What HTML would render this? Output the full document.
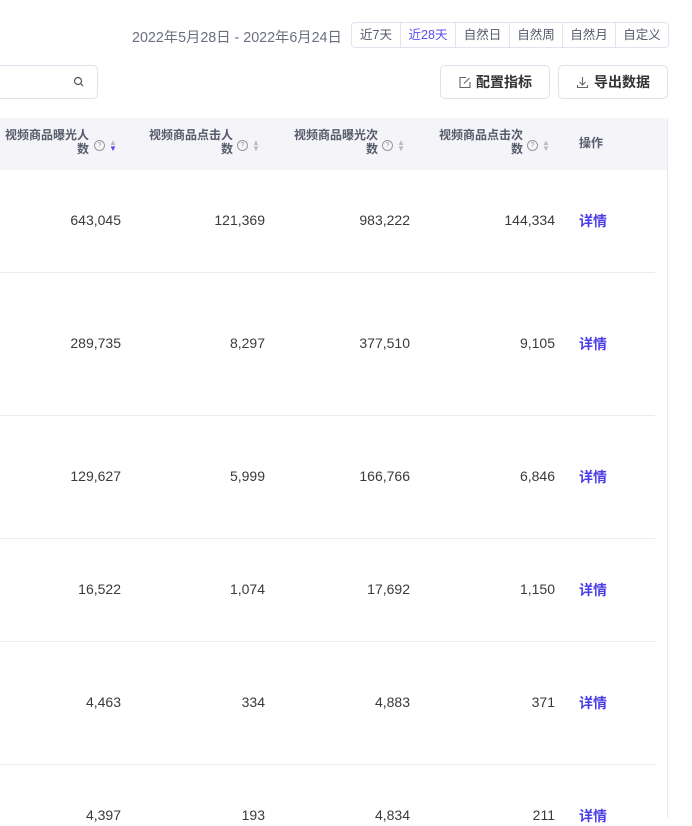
<!DOCTYPE html><html><head><meta charset="utf-8"><style>
body{margin:0;width:692px;height:818px;overflow:hidden;background:#fff;font-family:"Liberation Sans","Noto Sans CJK SC",sans-serif;position:relative}
.a{position:absolute}
.date{top:26px;left:132px;font-size:14.3px;color:#6b6f80}
.seg{top:22px;left:351px;height:24px;display:flex;border:1px solid #e1e3ee;border-radius:4px}
.seg div{font-size:12.5px;color:#555a6b;line-height:24px;border-left:1px solid #e1e3ee;text-align:center;box-sizing:border-box}
.seg div:first-child{border-left:none}
.btn{height:34px;border:1px solid #dfe1ec;border-radius:5px;font-size:14px;font-weight:bold;color:#333;display:flex;align-items:center;justify-content:center;gap:5px;box-sizing:border-box}
.hd{top:118px;left:0;width:668px;height:52px;background:#f5f5f9;border-top-right-radius:6px}
.vl{top:118px;left:667px;width:1px;height:700px;background:#e8e8f0}
.ht{font-size:12px;font-weight:bold;color:#565a6a;text-align:right;line-height:14px}
.q{display:inline-block;width:9px;height:9px;border:1px solid #999;border-radius:50%;font-size:7px;line-height:9px;text-align:center;color:#999;font-weight:normal;vertical-align:middle}
.n{font-size:14px;color:#3a3a3a;text-align:right;width:120px}
.d{font-size:14px;color:#4b3ee6;font-weight:bold;left:579px}
.ln{left:0;width:655px;height:1px;background:#ebebf2}
.s{display:inline-block;width:8px;vertical-align:middle;font-size:8px;line-height:6px;color:#bbb;margin-left:4px}
</style></head><body>
<div class="a date">2022年5月28日 - 2022年6月24日</div>
<div class="a seg"><div style="width:48px">近7天</div><div style="width:55px;color:#5b4ef0">近28天</div><div style="width:54px">自然日</div><div style="width:53px">自然周</div><div style="width:53px">自然月</div><div style="width:53px">自定义</div></div>
<div class="a" style="top:65px;left:-10px;width:108px;height:34px;border:1px solid #dfe1ec;border-radius:5px;box-sizing:border-box"></div>
<svg class="a" style="top:76px;left:73px" width="11" height="11" viewBox="0 0 11 11"><circle cx="5" cy="5" r="3.5" fill="none" stroke="#555" stroke-width="1.2"/><path d="M7.5 7.5L10 10" stroke="#555" stroke-width="1.2"/></svg>
<div class="a btn" style="top:65px;left:440px;width:110px"><svg width="13" height="13" viewBox="0 0 13 13"><path d="M8 1.5H2v10h10V6" fill="none" stroke="#666" stroke-width="1.1"/><path d="M6 7.5L11.5 2" stroke="#666" stroke-width="1.1"/></svg>配置指标</div>
<div class="a btn" style="top:65px;left:558px;width:110px"><svg width="13" height="13" viewBox="0 0 13 13"><path d="M6.5 1v8M3.5 6l3 3 3-3M1.5 9v2.5h10V9" fill="none" stroke="#666" stroke-width="1.1"/></svg>导出数据</div>
<div class="a hd"></div><div class="a vl"></div>
<div class="a ht" style="top:128px;left:0;width:89px">视频商品曝光人<br>数</div><div class="a" style="top:137px;left:94px"><span class="q">?</span><span class="s">▲<br><span style="color:#5b4ef0">▼</span></span></div>
<div class="a ht" style="top:128px;left:140px;width:93px">视频商品点击人<br>数</div><div class="a" style="top:137px;left:237px"><span class="q">?</span><span class="s">▲<br>▼</span></div>
<div class="a ht" style="top:128px;left:285px;width:93px">视频商品曝光次<br>数</div><div class="a" style="top:137px;left:382px"><span class="q">?</span><span class="s">▲<br>▼</span></div>
<div class="a ht" style="top:128px;left:430px;width:93px">视频商品点击次<br>数</div><div class="a" style="top:137px;left:527px"><span class="q">?</span><span class="s">▲<br>▼</span></div>
<div class="a ht" style="top:136px;left:579px">操作</div>

<div class="a n" style="top:212px;left:1px">643,045</div><div class="a n" style="top:212px;left:145px">121,369</div><div class="a n" style="top:212px;left:290px">983,222</div><div class="a n" style="top:212px;left:435px">144,334</div><div class="a d" style="top:211px">详情</div>
<div class="a ln" style="top:272px"></div>
<div class="a n" style="top:335px;left:1px">289,735</div><div class="a n" style="top:335px;left:145px">8,297</div><div class="a n" style="top:335px;left:290px">377,510</div><div class="a n" style="top:335px;left:435px">9,105</div><div class="a d" style="top:334px">详情</div>
<div class="a ln" style="top:415px"></div>
<div class="a n" style="top:468px;left:1px">129,627</div><div class="a n" style="top:468px;left:145px">5,999</div><div class="a n" style="top:468px;left:290px">166,766</div><div class="a n" style="top:468px;left:435px">6,846</div><div class="a d" style="top:467px">详情</div>
<div class="a ln" style="top:538px"></div>
<div class="a n" style="top:581px;left:1px">16,522</div><div class="a n" style="top:581px;left:145px">1,074</div><div class="a n" style="top:581px;left:290px">17,692</div><div class="a n" style="top:581px;left:435px">1,150</div><div class="a d" style="top:580px">详情</div>
<div class="a ln" style="top:641px"></div>
<div class="a n" style="top:694px;left:1px">4,463</div><div class="a n" style="top:694px;left:145px">334</div><div class="a n" style="top:694px;left:290px">4,883</div><div class="a n" style="top:694px;left:435px">371</div><div class="a d" style="top:693px">详情</div>
<div class="a ln" style="top:764px"></div>
<div class="a n" style="top:807px;left:1px">4,397</div><div class="a n" style="top:807px;left:145px">193</div><div class="a n" style="top:807px;left:290px">4,834</div><div class="a n" style="top:807px;left:435px">211</div><div class="a d" style="top:806px">详情</div>
</body></html>
